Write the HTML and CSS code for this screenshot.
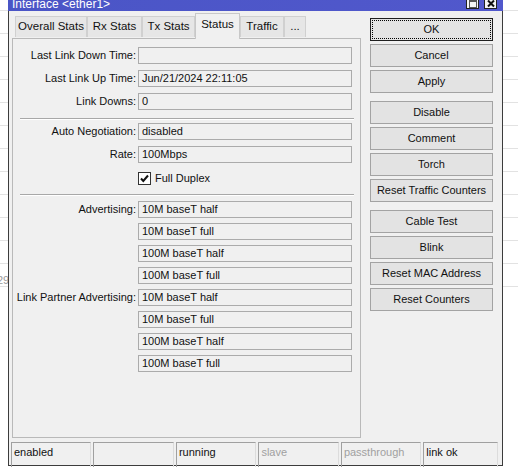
FILE: index.html
```html
<!DOCTYPE html>
<html>
<head>
<meta charset="utf-8">
<title>Interface ether1</title>
<link rel="stylesheet" href="styles.css">
</head>
<body>
<div class="bg-num">29</div>
<div class="window">
  <div class="titlebar">
    <span class="title">Interface &lt;ether1&gt;</span>
    <div class="tb-btns">
      <span class="tb-btn tb-max"><span class="max-sq"></span></span>
      <span class="tb-btn tb-close"><svg width="10" height="9" viewBox="0 0 10 9"><path d="M2 1.5 L8 7.5 M8 1.5 L2 7.5" stroke="#111" stroke-width="2" fill="none"/></svg></span>
    </div>
  </div>
  <div class="main">
    <div class="tabs-area">
      <div class="tabstrip">
        <div class="tab t1">Overall Stats</div>
        <div class="tab t2">Rx Stats</div>
        <div class="tab t3">Tx Stats</div>
        <div class="tab t4 sel">Status</div>
        <div class="tab t5">Traffic</div>
        <div class="tab t6">...</div>
      </div>
      <div class="panel">
        <div class="rows g1">
          <div class="lbl">Last Link Down Time:</div><div class="fld"></div>
          <div class="lbl">Last Link Up Time:</div><div class="fld">Jun/21/2024 22:11:05</div>
          <div class="lbl">Link Downs:</div><div class="fld">0</div>
        </div>
        <div class="sep s1"></div>
        <div class="rows g2">
          <div class="lbl">Auto Negotiation:</div><div class="fld">disabled</div>
          <div class="lbl">Rate:</div><div class="fld">100Mbps</div>
        </div>
        <div class="check-row">
          <span class="cbox"><svg width="11" height="11" viewBox="0 0 11 11"><path d="M2 5.5 L4.3 8 L9 2.5" stroke="#111" stroke-width="2" fill="none"/></svg></span>
          <span class="ctext">Full Duplex</span>
        </div>
        <div class="sep s2"></div>
        <div class="rows g3">
          <div class="lbl">Advertising:</div><div class="fld">10M baseT half</div>
          <div class="lbl"></div><div class="fld">10M baseT full</div>
          <div class="lbl"></div><div class="fld">100M baseT half</div>
          <div class="lbl"></div><div class="fld">100M baseT full</div>
          <div class="lbl">Link Partner Advertising:</div><div class="fld">10M baseT half</div>
          <div class="lbl"></div><div class="fld">10M baseT full</div>
          <div class="lbl"></div><div class="fld">100M baseT half</div>
          <div class="lbl"></div><div class="fld">100M baseT full</div>
        </div>
      </div>
    </div>
    <div class="buttons">
      <div class="btn ok">OK</div>
      <div class="btn">Cancel</div>
      <div class="btn">Apply</div>
      <div class="btn grp">Disable</div>
      <div class="btn">Comment</div>
      <div class="btn">Torch</div>
      <div class="btn">Reset Traffic Counters</div>
      <div class="btn grp">Cable Test</div>
      <div class="btn">Blink</div>
      <div class="btn">Reset MAC Address</div>
      <div class="btn">Reset Counters</div>
    </div>
  </div>
  <div class="statusbar">
    <div class="cell">enabled</div>
    <div class="cell"></div>
    <div class="cell">running</div>
    <div class="cell dim">slave</div>
    <div class="cell dim">passthrough</div>
    <div class="cell last">link ok</div>
  </div>
</div>
</body>
</html>
```

FILE: styles.css
```css
html, body {
  margin: 0;
  padding: 0;
}
body {
  width: 518px;
  height: 472px;
  overflow: hidden;
  background-color: #ffffff;
  background-image: repeating-linear-gradient(to bottom, transparent 0, transparent 10px, #e2e2e2 10px, #e2e2e2 11px, transparent 11px, transparent 23px);
  background-size: 100% 290px;
  background-repeat: no-repeat;
  font-family: "Liberation Sans", Arial, sans-serif;
  font-size: 11px;
  color: #111;
  position: relative;
}
.bg-num {
  position: absolute;
  left: -3px;
  top: 274px;
  font-size: 11px;
  color: #9a9a9a;
}
.window {
  position: relative;
  margin-left: 8px;
  margin-top: -10px;
  width: 493px;
  height: 475px;
  background: #f0f0f0;
  border-left: 1px solid #3c3c3c;
  border-right: 1px solid #3c3c3c;
  border-bottom: 1px solid #3c3c3c;
  display: flex;
  flex-direction: column;
}
.titlebar {
  height: 21px;
  flex: none;
  background: linear-gradient(to right, #4a55c6, #5158cc);
  display: flex;
  align-items: flex-end;
  padding-left: 4px;
  padding-right: 6px;
  margin-left: -1px;
  margin-right: -1px;
}
.title {
  color: #ffffff;
  font-size: 12px;
  line-height: 14px;
}
.tb-btns {
  margin-left: auto;
  display: flex;
  gap: 5px;
  align-self: flex-end;
  margin-bottom: 2px;
}
.tb-btn {
  width: 11px;
  height: 9px;
  background: #f4f4f4;
  border: 1px solid #222;
  display: flex;
  align-items: center;
  justify-content: center;
}
.max-sq {
  width: 6px;
  height: 5px;
  border: 1px solid #555;
  border-top-width: 2px;
}
.main {
  flex: none;
  height: 427px;
  display: flex;
  padding: 2px 9px 0 3px;
  gap: 9px;
}
.tabs-area {
  width: 349px;
  display: flex;
  flex-direction: column;
}
.tabstrip {
  height: 25px;
  display: flex;
  align-items: flex-end;
  padding-left: 3px;
  position: relative;
  z-index: 1;
}
.tab {
  height: 21px;
  box-sizing: border-box;
  background: #e6e6e6;
  border: 1px solid #d0d0d0;
  border-bottom: none;
  text-align: center;
  line-height: 19px;
  font-size: 11.5px;
  color: #111;
  margin-bottom: 1px;
}
.tab.sel {
  background: #f0f0f0;
  border-color: #c8c8c8;
  line-height: 20px;
  margin-bottom: -1px;
  height: 26px;
}
.t1 { width: 72px; }
.t2 { width: 55px; }
.t3 { width: 53px; }
.t4 { width: 45px; }
.t5 { width: 44px; }
.t6 { width: 22px; }
.panel {
  height: 400px;
  box-sizing: border-box;
  border: 1px solid #b9b9b9;
  background: #f0f0f0;
}
.rows {
  display: grid;
  grid-template-columns: 124px 214px;
  column-gap: 1px;
  row-gap: 6px;
}
.g1 { margin-top: 8px; }
.g2 { margin-top: 3px; }
.g3 { margin-top: 5px; row-gap: 5px; }
.lbl {
  height: 17px;
  line-height: 17px;
  text-align: right;
  padding-right: 1px;
  white-space: nowrap;
}
.fld {
  height: 15px;
  line-height: 15px;
  border: 1px solid #ababab;
  background: #f0f0f0;
  padding-left: 3px;
  white-space: nowrap;
}
.sep {
  margin-left: 7px;
  margin-right: 6px;
  border-top: 1px solid #a8a8a8;
  border-bottom: 1px solid #ffffff;
}
.s1 { margin-top: 8px; }
.s2 { margin-top: 8px; }
.check-row {
  margin-top: 8px;
  height: 15px;
  display: flex;
  align-items: center;
  padding-left: 125px;
}
.cbox {
  width: 11px;
  height: 11px;
  border: 1px solid #333;
  background: #fff;
  display: flex;
}
.ctext {
  margin-left: 4px;
  line-height: 15px;
  font-size: 11px;
}
.buttons {
  width: 123px;
  display: flex;
  flex-direction: column;
  gap: 3px;
  padding-top: 5px;
}
.btn {
  height: 21px;
  line-height: 21px;
  border: 1px solid #a3a3a3;
  background: #e3e3e3;
  text-align: center;
  white-space: nowrap;
}
.btn.grp { margin-top: 5px; }
.btn.ok {
  border-color: #1e1e1e;
  outline: 1px dotted #000;
  outline-offset: -3px;
}
.statusbar {
  flex: 1;
  display: flex;
  gap: 2px;
  padding: 2px 4px 0 2px;
}
.cell {
  width: 79px;
  height: 24px;
  border-top: 1px solid #a0a0a0;
  border-left: 1px solid #a0a0a0;
  border-right: 1px solid #dcdcdc;
  padding-left: 2px;
  line-height: 19px;
  white-space: nowrap;
}
.cell.dim { color: #a0a0a0; }
.cell.last { width: 73px; }
```
